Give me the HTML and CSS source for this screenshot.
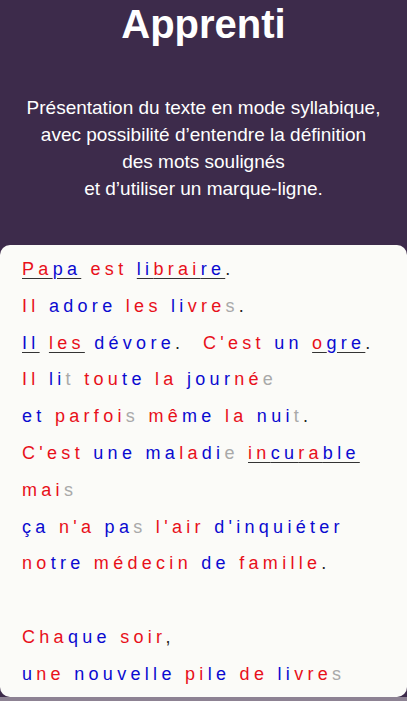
FILE: index.html
```html
<!DOCTYPE html>
<html lang="fr">
<head>
<meta charset="utf-8">
<title>Apprenti</title>
<link rel="stylesheet" href="styles.css">
</head>
<body>
<div class="page">
  <header class="hero">
    <h1 class="title">Apprenti</h1>
    <p class="intro">Présentation du texte en mode syllabique,<br>avec possibilité d’entendre la définition<br>des mots soulignés<br>et d’utiliser un marque-ligne.</p>
  </header>
  <main class="card">
    <p class="line"><span class="u"><span class="r">Pa</span><span class="b">pa</span></span> <span class="r">est</span> <span class="u"><span class="b">li</span><span class="r">brai</span><span class="b">re</span></span>.</p>
    <p class="line"><span class="r">Il</span> <span class="b">adore</span> <span class="r">les</span> <span class="b">li</span><span class="r">vre</span><span class="m">s</span>.</p>
    <p class="line"><span class="u"><span class="b">Il</span></span> <span class="u"><span class="r">les</span></span> <span class="b">dévore</span>.&nbsp; <span class="r">C'est</span> <span class="b">un</span> <span class="u"><span class="r">o</span><span class="b">gre</span></span>.</p>
    <p class="line"><span class="r">Il</span> <span class="b">li</span><span class="m">t</span> <span class="r">tou</span><span class="b">te</span> <span class="r">la</span> <span class="b">jour</span><span class="r">né</span><span class="m">e</span></p>
    <p class="line"><span class="b">et</span> <span class="r">parfoi</span><span class="m">s</span> <span class="r">mê</span><span class="b">me</span> <span class="r">la</span> <span class="b">nui</span><span class="m">t</span>.</p>
    <p class="line"><span class="r">C'est</span> <span class="b">une</span> <span class="b">ma</span><span class="r">la</span><span class="b">di</span><span class="m">e</span> <span class="u"><span class="r">in</span><span class="b">cu</span><span class="r">ra</span><span class="b">ble</span></span></p>
    <p class="line"><span class="r">mai</span><span class="m">s</span></p>
    <p class="line"><span class="b">ça</span> <span class="r">n'a</span> <span class="b">pa</span><span class="m">s</span> <span class="r">l'air</span> <span class="b">d'inquiéter</span></p>
    <p class="line"><span class="r">no</span><span class="b">tre</span> <span class="r">médecin</span> <span class="b">de</span> <span class="r">famille</span>.</p>
    <p class="line">&nbsp;</p>
    <p class="line"><span class="r">Cha</span><span class="b">que</span> <span class="r">soir</span>,</p>
    <p class="line"><span class="b">u</span><span class="r">ne</span> <span class="b">nouvelle</span> <span class="r">pi</span><span class="b">le</span> <span class="r">de</span> <span class="b">li</span><span class="r">vre</span><span class="m">s</span></p>
  </main>
</div>
</body>
</html>
```
FILE: styles.css
```css
html, body {
  margin: 0;
  padding: 0;
}
body {
  background: #8d8293;
  font-family: "Liberation Sans", Arial, sans-serif;
  width: 407px;
  height: 701px;
  overflow: hidden;
}
.page {
  background: #3d2b4b;
  height: 697px;
  display: flex;
  flex-direction: column;
}
.hero {
  color: #ffffff;
  text-align: center;
}
.title {
  margin: 0;
  font-size: 40px;
  line-height: 48px;
  font-weight: bold;
}
.intro {
  margin: 46px 0 43px;
  font-size: 19px;
  line-height: 27px;
}
.card {
  flex: 1;
  background: #fbfbf8;
  border-radius: 10px;
  padding: 6px 0 0 22px;
}
.line {
  margin: 0;
  font-size: 18px;
  line-height: 36.8px;
  letter-spacing: 4.3px;
  color: #222;
  white-space: pre;
}
.r { color: #e8101a; }
.b { color: #0a0ad0; }
.m { color: #a9a9a9; }
.u {
  text-decoration: underline;
  text-decoration-color: #333;
  text-underline-offset: 3px;
}
```
